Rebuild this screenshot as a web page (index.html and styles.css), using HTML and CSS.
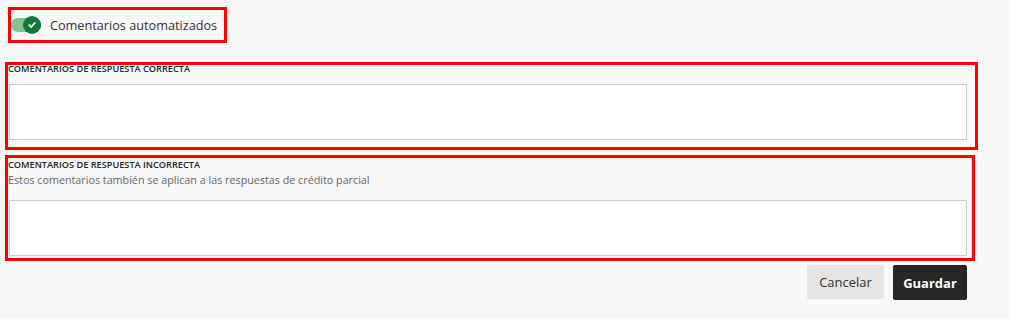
FILE: index.html
```html
<!DOCTYPE html>
<html lang="es">
<head>
<meta charset="utf-8">
<title>Comentarios automatizados</title>
<link rel="stylesheet" href="styles.css">
</head>
<body>
<div class="page">
  <div class="toggle-box">
    <span class="switch" role="switch" aria-checked="true">
      <span class="knob">
        <svg width="10" height="10" viewBox="0 0 10 10"><path d="M2.2 5.2 L4.2 7.1 L7.9 2.9" fill="none" stroke="#fff" stroke-width="1.7" stroke-linecap="round" stroke-linejoin="round"/></svg>
      </span>
    </span>
    <span class="toggle-label">Comentarios automatizados</span>
  </div>

  <div class="field-box correct">
    <div class="field-label">COMENTARIOS DE RESPUESTA CORRECTA</div>
    <textarea class="field-input" aria-label="Comentarios de respuesta correcta"></textarea>
  </div>

  <div class="field-box incorrect">
    <div class="field-label">COMENTARIOS DE RESPUESTA INCORRECTA</div>
    <div class="field-help">Estos comentarios también se aplican a las respuestas de crédito parcial</div>
    <textarea class="field-input help-input" aria-label="Comentarios de respuesta incorrecta"></textarea>
  </div>

  <div class="actions">
    <button class="btn btn-cancel">Cancelar</button>
    <button class="btn btn-save">Guardar</button>
  </div>
</div>
</body>
</html>
```

FILE: styles.css
```css
html, body {
  margin: 0;
  padding: 0;
  background: #ffffff;
}

body {
  font-family: "Open Sans", "Noto Sans", sans-serif;
  color: #333333;
}

.page {
  width: 1010px;
  height: 318px;
  background: #f8f8f8;
  padding-top: 7px;
  box-sizing: border-box;
}

.toggle-box {
  margin-left: 8px;
  width: 219px;
  height: 36px;
  border: 3px solid #ff0000;
  box-sizing: border-box;
  display: flex;
  align-items: center;
  gap: 9px;
}

.switch {
  position: relative;
  width: 30px;
  height: 14px;
  border-radius: 7px;
  background: #86c093;
  display: block;
  flex: none;
}

.knob {
  position: absolute;
  right: 0;
  top: -2px;
  width: 18px;
  height: 18px;
  border-radius: 50%;
  background: #13773a;
  display: flex;
  align-items: center;
  justify-content: center;
}

.knob svg {
  display: block;
}

.toggle-label {
  font-size: 12.7px;
  color: #333333;
  line-height: 18px;
}

.field-box {
  margin-left: 5px;
  border: 3px solid #ff0000;
  box-sizing: border-box;
}

.field-box.correct {
  margin-top: 19px;
  width: 973px;
  padding: 0 0 7px 0;
}

.field-box.incorrect {
  margin-top: 5px;
  width: 970px;
  padding: 3px 0 2px 0;
}

.field-label {
  font-size: 9.2px;
  font-weight: 600;
  line-height: 8px;
  color: #262626;
  letter-spacing: 0;
}

.field-help {
  margin-top: 4px;
  font-size: 10.75px;
  line-height: 15px;
  color: #666666;
}

.field-input {
  display: block;
  margin: 11px 0 0 1px;
  width: 958px;
  height: 56px;
  box-sizing: border-box;
  border: 1px solid #cccccc;
  background: #ffffff;
  resize: none;
  padding: 0;
  font-family: inherit;
}

.field-input.help-input {
  margin-top: 12px;
}

.actions {
  width: 967px;
  margin-top: 4px;
  display: flex;
  justify-content: flex-end;
  align-items: flex-start;
  gap: 9px;
}

.btn {
  font-family: "Open Sans", "Noto Sans", sans-serif;
  font-size: 13px;
  border: none;
  border-radius: 2px;
  padding: 0;
  cursor: pointer;
}

.btn-cancel {
  width: 77px;
  height: 34px;
  background: #e5e5e5;
  color: #333333;
}

.btn-save {
  width: 74px;
  height: 35px;
  background: #262626;
  color: #ffffff;
  font-weight: 700;
}
```
